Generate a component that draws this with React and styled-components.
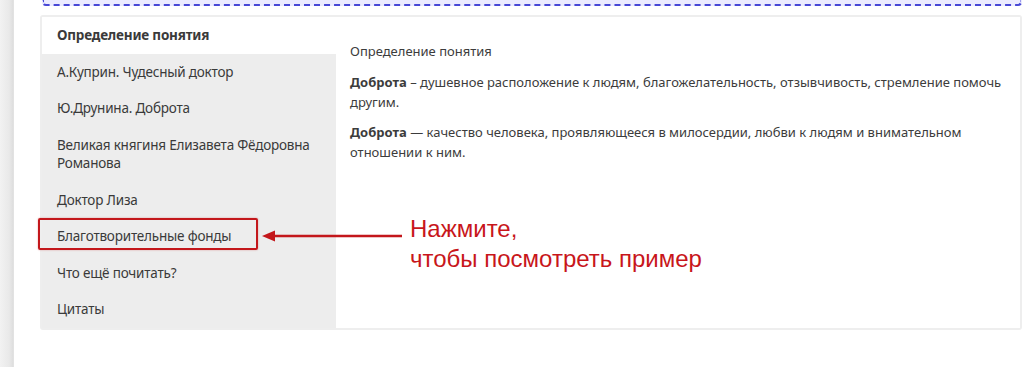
import React from 'react'
import styled, { createGlobalStyle } from 'styled-components'

const GlobalStyle = createGlobalStyle`
  html, body {
    margin: 0;
    padding: 0;
    background: #fff;
  }
  body {
    font-family: 'Noto Sans', 'Open Sans', sans-serif;
    color: #333;
  }
`

const Page = styled.div`
  display: flex;
  width: 1024px;
  height: 367px;
  overflow: hidden;
`

const SideShade = styled.div`
  width: 13px;
  flex: none;
  background: linear-gradient(to right, #f2f2f2 0%, #e9e9e9 70%, #dedede 100%);
  border-right: 1px solid #e2e2e2;
`

const Main = styled.div`
  flex: 1;
  padding: 0 2px 0 26px;
  display: flex;
  flex-direction: column;
`

const DashedBox = styled.div`
  height: 4px;
  margin-left: 2px;
  border: 2px dashed #4848d6;
  border-top: none;
  border-radius: 0 0 4px 4px;
  background: #ececff;
`

const Panel = styled.div`
  position: relative;
  margin-top: 9px;
  display: flex;
  border: 2px solid #eeeeee;
  border-radius: 3px;
  height: 311px;
`

const TabList = styled.ul`
  list-style: none;
  margin: 0;
  padding: 0;
  width: 294px;
  flex: none;
  background: #ededed;
`

const Tab = styled.li`
  position: relative;
  padding: 9px 15px;
  font-size: 13.5px;
  line-height: 18.5px;
  letter-spacing: -0.2px;
  color: #3a3a3a;
  font-weight: ${p => (p.active ? 700 : 400)};
  background: ${p => (p.active ? '#fff' : 'transparent')};
`

const Highlight = styled.span`
  position: absolute;
  left: -4px;
  top: 0;
  width: 216px;
  height: 28px;
  border: 2.5px solid #c3171b;
  border-radius: 2px;
  box-shadow: 0 0 2px rgba(195, 23, 27, 0.4);
`

const Content = styled.div`
  flex: 1;
  background: #fff;
  padding: 24px 14px 0 14px;
  font-size: 13px;
  line-height: 20px;
  color: #3c3c3c;
`

const Heading = styled.p`
  margin: 0 0 11px;
`

const Para = styled.p`
  margin: 0 0 10px;
  max-width: 655px;
`

const Callout = styled.div`
  position: absolute;
  left: 220px;
  top: 197px;
  display: flex;
  align-items: flex-start;
  gap: 8px;
  pointer-events: none;
`

const Arrow = styled.svg`
  margin-top: 16px;
  flex: none;
`

const CalloutText = styled.div`
  font-family: 'Liberation Sans', Arial, sans-serif;
  font-size: 24px;
  line-height: 30px;
  color: #c8161b;
`

const tabs = [
  'А.Куприн. Чудесный доктор',
  'Ю.Друнина. Доброта',
  'Великая княгиня Елизавета Фёдоровна Романова',
  'Доктор Лиза',
  'Благотворительные фонды',
  'Что ещё почитать?',
  'Цитаты',
]

export default function App() {
  return (
    <>
      <GlobalStyle />
      <Page>
        <SideShade />
        <Main>
          <DashedBox />
          <Panel>
            <TabList>
              <Tab active>Определение понятия</Tab>
              {tabs.map(t => (
                <Tab key={t}>
                  {t}
                  {t === 'Благотворительные фонды' && <Highlight />}
                </Tab>
              ))}
            </TabList>
            <Content>
              <Heading>Определение понятия</Heading>
              <Para>
                <b>Доброта</b> – душевное расположение к людям, благожелательность,
                отзывчивость, стремление помочь другим.
              </Para>
              <Para>
                <b>Доброта</b> — качество человека, проявляющееся в милосердии,
                любви к людям и внимательном отношении к ним.
              </Para>
            </Content>
            <Callout>
              <Arrow width="140" height="12" viewBox="0 0 140 12">
                <path d="M0 6 L13 0.5 L13 11.5 Z" fill="#c3171b" />
                <line x1="10" y1="6" x2="140" y2="6" stroke="#c3171b" strokeWidth="2.5" />
              </Arrow>
              <CalloutText>
                Нажмите,
                <br />
                чтобы посмотреть пример
              </CalloutText>
            </Callout>
          </Panel>
        </Main>
      </Page>
    </>
  )
}
